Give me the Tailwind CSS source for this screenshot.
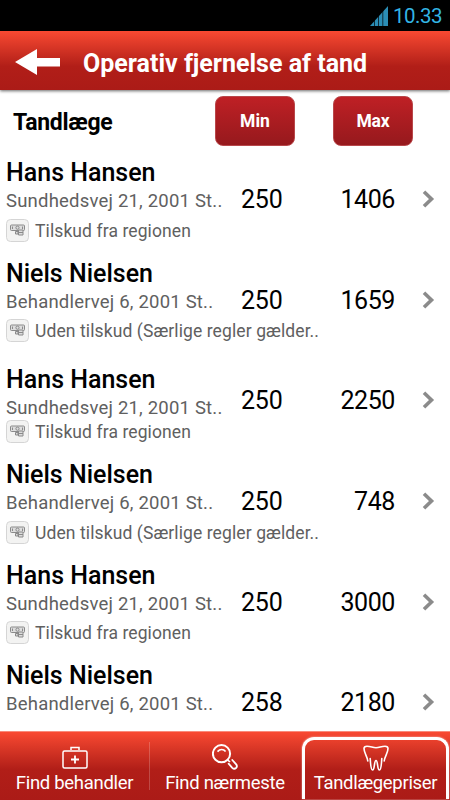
<!DOCTYPE html>
<html lang="da">
  <head>
    <meta charset="utf-8" />
    <title>Tandlægepriser</title>
    <script src="https://cdn.jsdelivr.net/npm/@tailwindcss/browser@4"></script>
  </head>

  <body>
    <div class="flex h-[800px] w-[450px] flex-col overflow-hidden bg-white font-['Roboto',sans-serif] whitespace-nowrap text-black">
      <!-- Status bar -->
      <div class="flex h-[31px] shrink-0 items-center justify-end gap-[5px] bg-black pr-[8px]">
        <svg class="mt-px h-5 w-[18px]" viewBox="0 0 18 20">
          <path d="M0 20L18 0V20Z" fill="#2b8db5" />
          <path d="M4.5 0V20M8.5 0V20M12.8 0V20" stroke="#000" stroke-width=".7" />
        </svg>
        <span class="mt-[2px] text-[20.5px] leading-none tracking-[-0.5px] text-[#33b5e5]">10.33</span>
      </div>

      <!-- Header -->
      <header class="z-10 flex h-[59px] shrink-0 items-center bg-linear-to-b from-[#f94932] via-[#b11e18] via-60% to-[#ab1b17] pl-[15px] shadow-[0_1px_3px_rgba(0,0,0,0.6)]">
        <svg class="mt-[3px] h-[26px] w-[45px]" viewBox="0 0 45 26">
          <path d="M0 13L22 0V9H45V17.5H22V26Z" fill="#fff" />
        </svg>
        <h1 class="ml-[23px] mt-[7px] text-[25px] leading-7 font-bold text-white">Operativ fjernelse af tand</h1>
      </header>

      <!-- Column titles -->
      <div class="flex h-[60px] shrink-0 items-start pt-[6px] pl-[13px]">
        <h2 class="w-[202px] pt-[13px] text-[23px] leading-7 font-bold tracking-[-0.3px]">Tandlæge</h2>
        <button class="h-[50px] w-20 rounded-lg border border-[#b8474a] bg-linear-to-b from-[#bf2025] to-[#96191d] text-[17.5px] font-bold text-white">Min</button>
        <button class="ml-[38px] h-[50px] w-20 rounded-lg border border-[#b8474a] bg-linear-to-b from-[#bf2025] to-[#96191d] text-[17.5px] font-bold tracking-[-0.2px] text-white">Max</button>
      </div>

      <!-- Price list -->
      <main id="priceList" class="min-h-0 flex-1 overflow-hidden"></main>

      <!-- Tabs -->
      <nav class="flex h-[69px] shrink-0 border-t border-[#f98a7b] bg-linear-to-b from-[#f94932] via-[#b11e18] via-55% to-[#ab1b17] text-[18.5px] tracking-[-0.3px] text-white">
        <a class="flex w-[149px] flex-col items-center pt-[14px]">
          <svg class="h-[23px] w-[26px]" viewBox="0 0 26 23" fill="none" stroke="#fff" stroke-width="1.5">
            <rect x="1" y="5" width="24" height="17" rx="1.5" />
            <path d="M9 4V1.5H17V4" />
            <path d="M13 9.5V17.5M9 13.5H17" stroke-width="1.8" />
          </svg>
          <span class="mt-[2px] leading-6">Find behandler</span>
        </a>
        <div class="mt-[10px] h-12 w-px bg-white/20"></div>
        <a class="flex w-[150px] flex-col items-center pt-[12px]">
          <svg class="h-[26px] w-[26px]" viewBox="0 0 26 26" fill="none" stroke="#fff">
            <circle cx="9.5" cy="9.7" r="8.6" stroke-width="2" />
            <path d="M5.5 7.6C8 4.8 11.5 4.8 13.6 7.6" stroke-width="1.6" />
            <path d="M15.6 15.8L18 18" stroke-width="1.6" />
            <path d="M20.3 16L24 20.2Q25.8 22.3 24 24Q22.2 25.6 20.3 23.8L16.6 19.6" stroke-width="1.8" stroke-linejoin="round" stroke-linecap="round" />
          </svg>
          <span class="mt-px leading-6">Find nærmeste</span>
        </a>
        <a class="mt-[5px] ml-[2px] flex h-[62px] w-[147px] flex-col items-center rounded-t-[12px] border-3 border-b-0 border-white pt-[5px] shadow-[0_0_2px_rgba(255,255,255,0.7)]">
          <svg class="h-[26px] w-[26px]" viewBox="0 0 26 26" fill="none" stroke="#fff" stroke-width="1.6" stroke-linecap="round" stroke-linejoin="round">
            <path d="M4.8 16C4.2 11 1 8 1 3.5Q1 1.2 4 1.2C8 1.2 9.5 2.8 13 2.8S18 1.2 22 1.2Q25 1.2 25 3.5C25 8 21.8 11 21.2 16" />
            <path d="M7.2 13.5C7.5 17 7.6 25 9.6 25C11.8 25 11 15.5 13 15.5S14.2 25 16.4 25C18.4 25 18.5 17 18.8 13.5" />
          </svg>
          <span class="leading-6">Tandlægepriser</span>
        </a>
      </nav>
    </div>

    <!-- JavaScript -->
    <script>
      const hansen = { name: "Hans Hansen", address: "Sundhedsvej 21, 2001 St..", subsidy: "Tilskud fra regionen" };
      const nielsen = { name: "Niels Nielsen", address: "Behandlervej 6, 2001 St..", subsidy: "Uden tilskud (Særlige regler gælder.." };
      const dentists = [
        { ...hansen, min: 250, max: 1406 },
        { ...nielsen, min: 250, max: 1659 },
        { ...hansen, min: 250, max: 2250, low: true },
        { ...nielsen, min: 250, max: 748 },
        { ...hansen, min: 250, max: 3000 },
        { ...nielsen, min: 258, max: 2180, subsidy: "" },
      ];

      const subsidyRow = (text) => `
          <div class="flex h-[24px] items-center gap-[6px]">
            <svg class="h-[23px] w-[23px]" viewBox="0 0 23 23" fill="none" stroke="#8a8a8a" stroke-width="1">
              <rect x=".5" y=".5" width="22" height="22" rx="4" fill="#f3f3f2" stroke="#d5d5d5" />
              <rect x="4.5" y="6" width="14" height="5.5" rx="1" fill="#ddd" />
              <path d="M6.5 7.5V10M16.5 7.5V10" />
              <circle cx="11.5" cy="8.7" r="1.6" />
              <path d="M9.5 12.5H12V15H9.5ZM12.5 11H17V16H12.5ZM12.5 13.5H17" fill="#ddd" />
            </svg>
            <span class="mt-px text-[17.5px] leading-6 tracking-[0.1px] text-[#606060]">${text}</span>
          </div>`;

      document.getElementById("priceList").innerHTML = dentists
        .map(
          (d) => `
        <div class="h-[100.7px] pl-[6px]">
          <div class="flex h-[68px]">
            <div class="w-[224px] ${d.low ? "pt-[15px]" : "pt-[9px]"}">
              <div class="text-[25px] leading-7 font-medium">${d.name}</div>
              <div class="text-[18.5px] leading-7 tracking-[0.2px] text-[#606060]">${d.address}</div>
            </div>
            <div class="w-[55px] pt-[36px] pl-[11px] text-[25px] leading-7 tracking-[-0.2px]">${d.min}</div>
            <div class="w-[110px] pt-[36px] text-right text-[25px] leading-7 tracking-[-0.4px]">${d.max}</div>
            <svg class="mt-[40px] ml-[27px] h-[18px] w-[13px]" viewBox="0 0 13 18" fill="none" stroke="#8b8b8b" stroke-width="3.6">
              <path d="M2 1.8L9.5 9L2 16.2" />
            </svg>
          </div>
          ${d.subsidy ? subsidyRow(d.subsidy) : ""}
        </div>`
        )
        .join("");
    </script>
  </body>
</html>
